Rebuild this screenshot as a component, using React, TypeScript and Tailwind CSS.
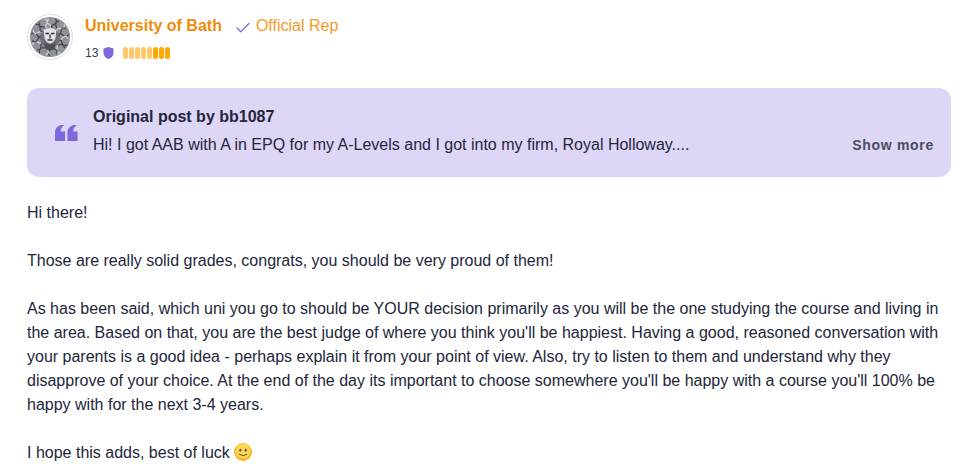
import { Check } from 'lucide-react';

function Avatar() {
    const curls = Array.from({ length: 22 }, (_, i) => (i * 360) / 22);
    return (
        <div className="w-[46px] h-[46px] rounded-full bg-white border border-[#dcdde0] flex items-center justify-center shrink-0">
            <svg width="40" height="40" viewBox="0 0 40 40">
                <circle cx="20" cy="20" r="20" fill="#8f9298" />
                {curls.map((a, i) => (
                    <path
                        key={a}
                        d={i % 2 ? 'M20 1 Q24 4 20 7 Q17 9 20 11' : 'M19 2 Q15 5 20 8 Q23 10 20 12'}
                        stroke={i % 3 ? '#43464d' : '#d5d6d9'}
                        strokeWidth="1.3"
                        fill="none"
                        transform={`rotate(${a} 20 20)`}
                    />
                ))}
                <circle cx="20" cy="21" r="10" fill="#6d7077" />
                <path d="M13.5 13 Q20 9 26.5 13 L25.5 21 Q24 25.5 20 26.5 Q16 25.5 14.5 21 Z" fill="#e2e3e5" />
                <path d="M15.5 16.5 h3.5 M21 16.5 h3.5 M20 17.5 v4 M17.5 23 h5" stroke="#2f3238" strokeWidth="1.3" />
                <path d="M14 25 Q20 30 26 25 L24.5 32 Q20 35 15.5 32 Z" fill="#4d5057" />
            </svg>
        </div>
    );
}

function Smiley() {
    return (
        <svg width="18" height="18" viewBox="0 0 20 20" className="inline-block align-[-3px]">
            <circle cx="10" cy="10" r="10" fill="#f5b52a" />
            <circle cx="10" cy="9" r="8.3" fill="#fdd654" />
            <ellipse cx="7" cy="8" rx="1.1" ry="1.6" fill="#5d4037" />
            <ellipse cx="13" cy="8" rx="1.1" ry="1.6" fill="#5d4037" />
            <path d="M5.5 12.5 Q10 15.5 14.5 12.5" stroke="#5d4037" strokeWidth="1.1" fill="none" />
        </svg>
    );
}

function RepBar() {
    const pips = [0, 1, 2, 3, 4, 5, 6, 7];
    return (
        <div className="flex gap-px ml-[9px]">
            {pips.map((p) => (
                <span key={p} className={p < 5 ? 'w-[5px] h-3 rounded-full bg-[#ffc766]' : 'w-[5px] h-3 rounded-full bg-[#ffa800]'} />
            ))}
        </div>
    );
}

export default function App() {
    return (
        <div className="w-[978px] h-[474px] overflow-hidden bg-white px-[27px] pt-[14px] font-['Liberation_Sans',Arial,sans-serif] text-[#23263b]">
            <div className="flex items-start gap-3">
                <Avatar />
                <div>
                    <div className="flex items-center h-6">
                        <span className="font-bold text-base text-[#f08c0a]">University of Bath</span>
                        <Check size={18} strokeWidth={1.6} className="ml-[12px] mt-[3px] text-[#7f67dd]" />
                        <span className="ml-[4px] text-base text-[#f59a23]">Official Rep</span>
                    </div>
                    <div className="flex items-center mt-[6px] h-[18px]">
                        <span className="text-xs text-[#3a3c4e]">13</span>
                        <svg width="11" height="12" viewBox="0 0 11 12" className="ml-[5px]">
                            <path d="M5.5 0 L10.5 1.6 V6 Q10.5 10 5.5 12 Q0.5 10 0.5 6 V1.6 Z" fill="#7f67dd" />
                        </svg>
                        <RepBar />
                    </div>
                </div>
            </div>

            <div className="mt-[26px] h-[89px] rounded-xl bg-[#ded6f6] flex items-center pl-[28px] pr-[17px]">
                <svg width="23" height="16" viewBox="0 0 24 17" className="shrink-0 mt-[1px]" preserveAspectRatio="none">
                    <path d="M0 17 V8 Q0 2 6 0 L10 0 Q6 2.5 6 7 H10.5 V17 Z M13 17 V8 Q13 2 19 0 L23 0 Q19 2.5 19 7 H23.5 V17 Z" fill="#7f67dd" />
                </svg>
                <div className="ml-[15px] flex-1 min-w-0 -mt-[4px]">
                    <div className="font-bold text-base leading-6">Original post by bb1087</div>
                    <div className="flex items-center justify-between mt-1">
                        <span className="text-base leading-6">Hi! I got AAB with A in EPQ for my A-Levels and I got into my firm, Royal Holloway....</span>
                        <span className="text-sm font-bold tracking-[0.7px] text-[#4b4d5e]">Show more</span>
                    </div>
                </div>
            </div>

            <div className="mt-[24px] text-base leading-6">
                <p>Hi there!</p>
                <p className="mt-6">Those are really solid grades, congrats, you should be very proud of them!</p>
                <p className="mt-6">
                    As has been said, which uni you go to should be YOUR decision primarily as you will be the one studying the course and living in the area. Based on that, you are the best judge of where you think you'll be happiest. Having a good, reasoned conversation with your parents is a good idea - perhaps explain it from your point of view. Also, try to listen to them and understand why they disapprove of your choice. At the end of the day its important to choose somewhere you'll be happy with a course you'll 100% be happy with for the next 3-4 years.
                </p>
                <p className="mt-6">I hope this adds, best of luck <Smiley /></p>
            </div>
        </div>
    );
}
